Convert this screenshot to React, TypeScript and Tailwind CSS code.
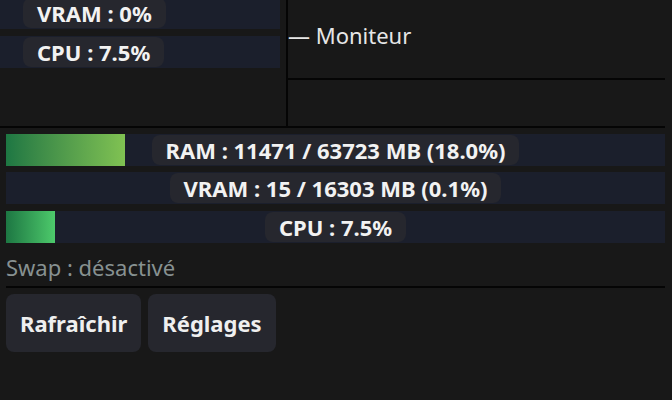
import React from 'react';

type Bar = {
    label: string;
    ratio: number;
    fill: string;
};

const bars: Bar[] = [
    { label: 'RAM : 11471 / 63723 MB (18.0%)', ratio: 0.18, fill: 'bg-gradient-to-r from-[#1d7743] to-[#80c252]' },
    { label: 'VRAM : 15 / 16303 MB (0.1%)', ratio: 0.001, fill: 'bg-gradient-to-r from-[#1d7743] to-[#2f8a48]' },
    { label: 'CPU : 7.5%', ratio: 0.075, fill: 'bg-gradient-to-r from-[#1d7743] to-[#4dca6b]' },
];

const Pill: React.FC<{ text: string }> = ({ text }) => (
    <div className="h-full flex items-center px-[14px] rounded-lg bg-[#26272e] text-[#f2f2f2] text-[22px] font-bold leading-none whitespace-nowrap">
        {text}
    </div>
);

const UsageBar: React.FC<{ bar: Bar }> = ({ bar }) => (
    <div className="relative h-[32px] w-[659px] bg-[#1b1f2c]">
        {bar.ratio > 0.005 && (
            <div className={`h-full ${bar.fill}`} style={{ width: `${bar.ratio * 100}%` }} />
        )}
        {/* label sits over the fill */}
        <div className="absolute inset-0 flex justify-center py-[1px]">
            <Pill text={bar.label} />
        </div>
    </div>
);

export default function App() {
    return (
        <div
            className="w-[672px] h-[400px] overflow-hidden bg-[#181818]"
            style={{ fontFamily: '"Noto Sans", "Open Sans", sans-serif' }}
        >
            {/* top: scrolled mini monitor + side label */}
            <div className="flex h-[126px] w-[665px]">
                <div className="w-[286px] -mt-[3px] flex flex-col gap-[7px]">
                    <div className="h-[32px] w-[280px] bg-[#1b1f2c] pl-[23px] py-[1px]">
                        <div className="inline-flex h-full">
                            <Pill text="VRAM : 0%" />
                        </div>
                    </div>
                    <div className="h-[32px] w-[280px] bg-[#1b1f2c] pl-[23px] py-[1px]">
                        <div className="inline-flex h-full">
                            <Pill text="CPU : 7.5%" />
                        </div>
                    </div>
                </div>
                <div className="w-[2px] bg-[#050505]" />
                <div className="flex-1 flex flex-col">
                    <div className="h-[80px] border-b-2 border-[#050505] pt-[20px] text-[22px] leading-[30px] text-[#e6e6e6]">
                        — Moniteur
                    </div>
                </div>
            </div>
            <div className="h-[2px] w-[665px] bg-[#050505]" />

            <div className="pl-[6px] pt-[6px] flex flex-col">
                <UsageBar bar={bars[0]} />
                <div className="mt-[6px]"><UsageBar bar={bars[1]} /></div>
                <div className="mt-[7px]"><UsageBar bar={bars[2]} /></div>

                <div className="mt-[9px] text-[22px] leading-[30px] text-[#879191]">Swap : désactivé</div>
                <div className="mt-[4px] h-[2px] w-[659px] bg-[#050505]" />

                <div className="mt-[6px] flex gap-[7px]">
                    <button className="h-[58px] px-[14px] rounded-lg bg-[#26272e] text-[#efefef] text-[22px] font-bold">
                        Rafraîchir
                    </button>
                    <button className="h-[58px] px-[14px] rounded-lg bg-[#26272e] text-[#efefef] text-[22px] font-bold">
                        Réglages
                    </button>
                </div>
            </div>
        </div>
    );
}
